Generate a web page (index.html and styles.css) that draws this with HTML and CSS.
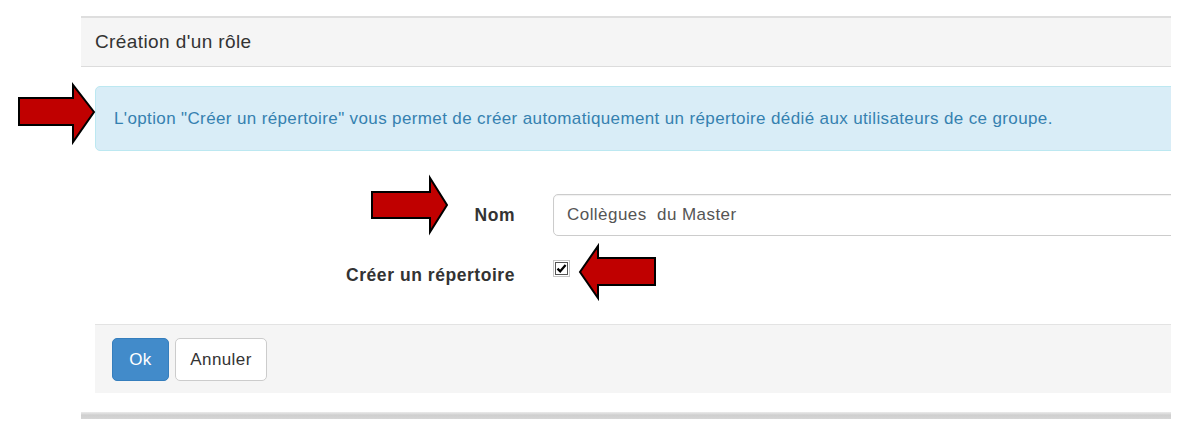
FILE: index.html
```html
<!DOCTYPE html>
<html lang="fr">
<head>
<meta charset="utf-8">
<title>Création d'un rôle</title>
<link rel="stylesheet" href="styles.css">
</head>
<body>
<div class="panel">
  <div class="panel-heading">Création d'un rôle</div>
  <div class="panel-body">
    <div class="alert">L'option "Créer un répertoire" vous permet de créer automatiquement un répertoire dédié aux utilisateurs de ce groupe.</div>
    <form class="form">
      <div class="row row-name">
        <label class="label" for="nom">Nom</label>
        <div class="input">Collègues&nbsp; du Master</div>
      </div>
      <div class="row row-check">
        <label class="label">Créer un répertoire</label>
        <span class="checkbox">
          <svg width="17" height="17" viewBox="0 0 17 17">
            <rect x="0.5" y="0.5" width="16" height="16" fill="none" stroke="#8a8a8a" stroke-dasharray="1 1"/>
            <rect x="2.5" y="2.5" width="12" height="12" fill="#fff" stroke="#555"/>
            <path d="M4.5 8.6 L7.2 11.3 L12.6 5" fill="none" stroke="#000" stroke-width="2.2"/>
          </svg>
        </span>
      </div>
    </form>
    <div class="footer">
      <button class="btn btn-primary" type="button">Ok</button>
      <button class="btn btn-default" type="button">Annuler</button>
    </div>
  </div>
  <div class="bottom-bar"></div>
</div>
<svg class="arrows" width="1183" height="428" viewBox="0 0 1183 428">
  <polygon points="19,98 73,98 73,85 94,112 73,142 73,125 19,125" fill="#c00000" stroke="#000" stroke-width="2" stroke-linejoin="miter"/>
  <polygon points="372,192 430,192 430,178 447,205 430,232 430,218 372,218" fill="#c00000" stroke="#000" stroke-width="2" stroke-linejoin="miter"/>
  <polygon points="655,258 598,258 598,246 580,272 598,298 598,285 655,285" fill="#c00000" stroke="#000" stroke-width="2" stroke-linejoin="miter"/>
</svg>
</body>
</html>
```
FILE: styles.css
```css
html, body {
  margin: 0;
  padding: 0;
  background: #fff;
}
body {
  font-family: "Liberation Sans", Arial, sans-serif;
  color: #333;
  width: 1183px;
  height: 428px;
  overflow: hidden;
  position: relative;
}
.panel {
  margin: 16px 0 0 81px;
  width: 1090px;
  border-top: 2px solid #dedede;
  overflow: hidden;
}
.panel-heading {
  height: 48px;
  line-height: 48px;
  background: #f5f5f5;
  border-bottom: 1px solid #dcdcdc;
  padding-left: 14px;
  font-size: 19px;
  letter-spacing: 0.4px;
  color: #333;
}
.panel-body {
  padding-left: 14px;
}
.alert {
  margin-top: 19px;
  margin-right: -10px;
  padding: 19px 18px;
  line-height: 25px;
  font-size: 17px;
  letter-spacing: 0.37px;
  color: #3581b0;
  background: #d9edf7;
  border: 1px solid #bce8f1;
  border-radius: 5px;
}
.form {
  margin-top: 43px;
  display: flex;
  flex-direction: column;
  gap: 18px;
}
.row {
  display: grid;
  grid-template-columns: 420px 1fr;
  column-gap: 38px;
}
.row-name {
  align-items: center;
  height: 42px;
}
.row-check {
  height: 36px;
  align-items: start;
}
.label {
  text-align: right;
  font-weight: bold;
  font-size: 17.5px;
  letter-spacing: 0.55px;
  line-height: 24px;
  color: #333;
}
.row-check .label {
  padding-top: 9px;
}
.input {
  height: 40px;
  line-height: 40px;
  border: 1px solid #ccc;
  border-radius: 5px;
  margin-right: -10px;
  padding-left: 13px;
  font-size: 17px;
  letter-spacing: 0.45px;
  color: #555;
  box-shadow: inset 0 1px 1px rgba(0,0,0,0.06);
}
.checkbox {
  display: block;
  width: 17px;
  height: 17px;
  margin-top: 6px;
}
.checkbox svg {
  display: block;
}
.footer {
  margin-top: 34px;
  margin-right: -10px;
  height: 55px;
  padding: 13px 0 0 17px;
  background: #f5f5f5;
  border-top: 1px solid #e3e3e3;
  display: flex;
  gap: 6px;
  align-items: flex-start;
}
.btn {
  height: 43px;
  font-family: "Liberation Sans", Arial, sans-serif;
  font-size: 17px;
  letter-spacing: 0.4px;
  border-radius: 5px;
  padding: 0;
  cursor: pointer;
}
.btn-primary {
  width: 57px;
  background: #428bca;
  border: 1px solid #357ebd;
  color: #fff;
}
.btn-default {
  width: 92px;
  background: #fff;
  border: 1px solid #ccc;
  color: #333;
}
.bottom-bar {
  margin-top: 19px;
  height: 7px;
  background: linear-gradient(#ebebeb, #cfcfcf 45%, #d6d6d6);
}
.arrows {
  position: absolute;
  left: 0;
  top: 0;
  pointer-events: none;
}
```
